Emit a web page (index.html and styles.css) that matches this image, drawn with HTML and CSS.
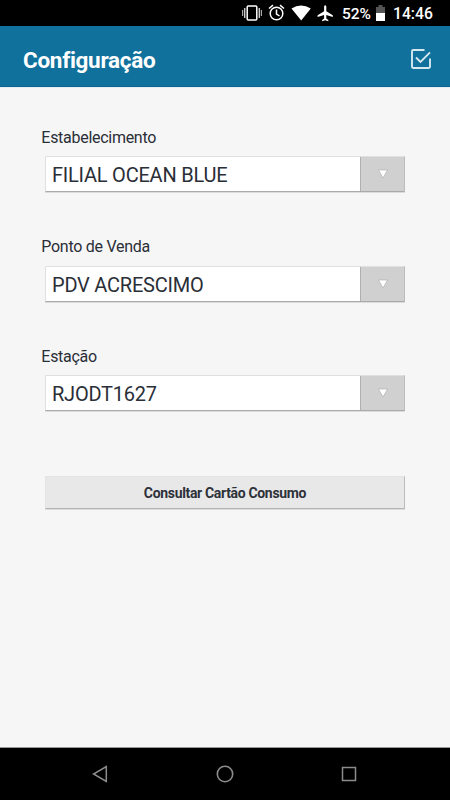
FILE: index.html
```
<!DOCTYPE html>
<html lang="pt-BR">
<head>
<meta charset="utf-8">
<title>Configuração</title>
<link rel="stylesheet" href="styles.css">
</head>
<body>
<div class="screen">
  <div class="status">
    <svg class="status-icons" width="94" height="26" viewBox="240 0 94 26" aria-hidden="true">
      <rect x="247.2" y="6" width="9.6" height="14" rx="1" fill="none" stroke="#fff" stroke-width="1.5"/>
      <path d="M244.700 8v10M259.300 8v10" stroke="#ccc" stroke-width="1.400"/>
      <path d="M242.600 10v6M261.400 10v6" stroke="#aaa" stroke-width="1.200"/>
      <circle cx="276.500" cy="13.500" r="6.300" fill="none" stroke="#fff" stroke-width="1.500"/>
      <path d="M276.500 9.500v4.500l3 2M269 8.500l4-3.300M284 8.500l-4-3.300" fill="none" stroke="#fff" stroke-width="1.500"/>
      <path d="M291.500 8.600Q301 2.400 310.800 8.600L301.200 20.500Z" fill="#fff"/>
      <path d="M324.100 6.300Q325.200 4 326.300 6.300V11.200L332.800 15.200V17L326.300 15V18.600L328.300 20V21.200L325.200 20.300L322.100 21.200V20L324.100 18.600V15L317.600 17V15.200L324.100 11.200Z" fill="#fff"/>
    </svg>
    <span class="percent">52%</span>
    <svg class="battery" width="9" height="16" viewBox="0 0 9 16" aria-hidden="true">
      <path d="M0 2H2.500V0H6.500V2H9V8H0Z" fill="#555"/>
      <path d="M0 8H9V16H0Z" fill="#fff"/>
    </svg>
    <span class="clock">14:46</span>
  </div>
  <header class="header">
    <h1 class="title">Configuração</h1>
    <svg class="confirm" width="22" height="22" viewBox="0 0 22 22" aria-hidden="true">
      <path d="M14.500 2H3.200Q2 2 2 3.200V18.800Q2 20 3.200 20H18.800Q20 20 20 18.800V10.500M6 9.500L10.500 14L20 4.300" fill="none" stroke="#d5e8f0" stroke-width="1.900"/>
    </svg>
  </header>
  <main class="content">
    <section class="field">
      <div class="label">Estabelecimento</div>
      <div class="select"><span class="value">FILIAL OCEAN BLUE</span><span class="arrow"><svg width="12" height="10" viewBox="0 0 12 10"><path d="M1.500 1H10.500L6 9Z" fill="#fff" stroke="#aaa" stroke-width=".6"/></svg></span></div>
    </section>
    <section class="field">
      <div class="label">Ponto de Venda</div>
      <div class="select"><span class="value">PDV ACRESCIMO</span><span class="arrow"><svg width="12" height="10" viewBox="0 0 12 10"><path d="M1.500 1H10.500L6 9Z" fill="#fff" stroke="#aaa" stroke-width=".6"/></svg></span></div>
    </section>
    <section class="field">
      <div class="label">Estação</div>
      <div class="select"><span class="value">RJODT1627</span><span class="arrow"><svg width="12" height="10" viewBox="0 0 12 10"><path d="M1.500 1H10.500L6 9Z" fill="#fff" stroke="#aaa" stroke-width=".6"/></svg></span></div>
    </section>
    <button class="consult">Consultar Cartão Consumo</button>
  </main>
  <nav class="nav">
    <svg width="16" height="18" viewBox="0 0 16 18"><path d="M14.300 1.600V16.400L1.600 9Z" fill="none" stroke="#8c8c8c" stroke-width="1.500"/></svg>
    <svg width="18" height="18" viewBox="0 0 18 18"><circle cx="9" cy="9" r="7.700" fill="none" stroke="#8c8c8c" stroke-width="1.600"/></svg>
    <svg width="16" height="16" viewBox="0 0 16 16"><rect x="1.500" y="1.500" width="13" height="13" fill="none" stroke="#8c8c8c" stroke-width="1.500"/></svg>
  </nav>
</div>
</body>
</html>
```
FILE: styles.css
```
* { box-sizing: border-box; }
body { margin: 0; background: #f6f6f6; font-family: Roboto, sans-serif; color: #2a2e37; }
svg { display: block; flex: none; }
.screen { width: 450px; height: 800px; display: flex; flex-direction: column; overflow: hidden; }
.status { height: 26px; flex: none; background: #000; color: #fff; display: flex; padding-left: 240px; font-size: 15.700px; line-height: 28px; font-weight: 500; white-space: nowrap; }
.percent { width: 33.500px; margin-left: 8px; font-size: 15.500px; }
.battery { margin-top: 5px; }
.clock { margin-left: 8.500px; }
.header { height: 61px; flex: none; background: #0f719c; border-bottom: 1px solid #0b6490; display: flex; align-items: center; justify-content: space-between; padding: 6px 18px 0 23px; }
.title { margin: 0; padding-top: 2px; color: #fff; font-size: 22.500px; line-height: 30px; font-weight: 700; letter-spacing: -.3px; white-space: nowrap; }
.content { flex: 1; padding: 38.800px 45px 0; border-top: 1px solid #e4eef3; }
.field { height: 109.600px; }
.label { height: 29.200px; margin-left: -3.700px; font-size: 16px; line-height: 21px; letter-spacing: -.28px; white-space: nowrap; }
.select { height: 36px; width: 360px; display: flex; background: #fff; border: 1px solid #e0e0e0; border-bottom-color: #aaa; border-right-color: #bcbcbc; box-shadow: 0 1px 0 #dcdcdc; }
.value { flex: 1; padding-left: 6px; font-size: 20px; line-height: 37px; letter-spacing: -.22px; white-space: nowrap; }
.arrow { width: 44px; background: #d0d0d0; border-left: 1px solid #b0b0b0; display: flex; align-items: center; justify-content: center; }
.consult { display: block; width: 360px; height: 33px; margin-top: 20.400px; padding: 2px 0 0; background: #e8e8e8; border: 1px solid #e4e4e4; border-right-color: #bbb; border-bottom-color: #b4b4b4; box-shadow: 0 1px 0 #ddd; color: #2d313a; font: 700 14px Roboto, sans-serif; letter-spacing: -.33px; }
.nav { height: 53px; flex: none; background: #000; border-top: 1px solid #999; display: flex; align-items: center; justify-content: space-between; padding: 0 93px 0 92px; }
```
